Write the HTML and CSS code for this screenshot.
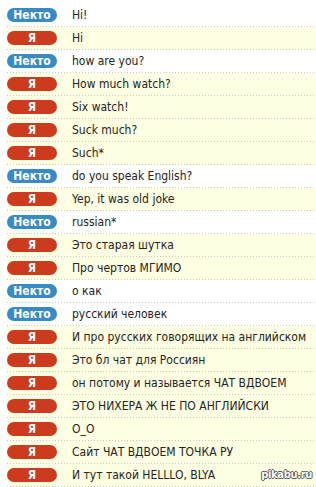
FILE: index.html
```html
<!DOCTYPE html>
<html lang="ru">
<head>
  <title>Чат вдвоем</title>
  <meta charset="UTF-8" />
  <meta name="viewport" content="width=device-width" />
  <link rel="stylesheet" href="styles.css">
</head>
<body>
  <main class="chat">
    <div class="msg"><span class="who them">Некто</span><span class="text">Hi!</span></div>
    <div class="msg me"><span class="who">Я</span><span class="text">Hi</span></div>
    <div class="msg"><span class="who them">Некто</span><span class="text">how are you?</span></div>
    <div class="msg me"><span class="who">Я</span><span class="text">How much watch?</span></div>
    <div class="msg me"><span class="who">Я</span><span class="text">Six watch!</span></div>
    <div class="msg me"><span class="who">Я</span><span class="text">Suck much?</span></div>
    <div class="msg me"><span class="who">Я</span><span class="text">Such*</span></div>
    <div class="msg"><span class="who them">Некто</span><span class="text">do you speak English?</span></div>
    <div class="msg me"><span class="who">Я</span><span class="text">Yep, it was old joke</span></div>
    <div class="msg"><span class="who them">Некто</span><span class="text">russian*</span></div>
    <div class="msg me"><span class="who">Я</span><span class="text">Это старая шутка</span></div>
    <div class="msg me"><span class="who">Я</span><span class="text">Про чертов МГИМО</span></div>
    <div class="msg"><span class="who them">Некто</span><span class="text">о как</span></div>
    <div class="msg"><span class="who them">Некто</span><span class="text">русский человек</span></div>
    <div class="msg me"><span class="who">Я</span><span class="text">И про русских говорящих на английском</span></div>
    <div class="msg me"><span class="who">Я</span><span class="text">Это бл чат для Россиян</span></div>
    <div class="msg me"><span class="who">Я</span><span class="text">он потому и называется ЧАТ ВДВОЕМ</span></div>
    <div class="msg me"><span class="who">Я</span><span class="text">ЭТО НИХЕРА Ж НЕ ПО АНГЛИЙСКИ</span></div>
    <div class="msg me"><span class="who">Я</span><span class="text">O_O</span></div>
    <div class="msg me"><span class="who">Я</span><span class="text">Сайт ЧАТ ВДВОЕМ ТОЧКА РУ</span></div>
    <div class="msg me"><span class="who">Я</span><span class="text">И тут такой HELLLO, BLYA</span></div>
  </main>
  <div class="watermark">pikabu.ru</div>
</body>
</html>
```

FILE: styles.css
```css
body {
  margin: 0;
  background: #fff;
  font-family: "DejaVu Sans Condensed", "DejaVu Sans", sans-serif;
  overflow: hidden;
}

.chat {
  padding: 4px 0 0 7px;
}

.msg {
  display: flex;
  align-items: center;
  height: 22px;
  padding-bottom: 1px;
  background: repeating-linear-gradient(90deg, #c9c9c9 0 1px, transparent 1px 3px) bottom / 100% 1px no-repeat;
}

.msg.me {
  background: repeating-linear-gradient(90deg, #c9c9c9 0 1px, transparent 1px 3px) bottom / 100% 1px no-repeat, #ffffe3;
}

.who {
  flex: none;
  width: 50px;
  height: 14px;
  line-height: 14px;
  border-radius: 7px;
  background: #cc3b1d;
  color: #fff;
  font-size: 12px;
  font-weight: bold;
  text-align: center;
}

.who.them {
  background: #378ac4;
}

.text {
  margin-left: 15px;
  font-size: 12px;
  color: #222;
  white-space: nowrap;
}

.watermark {
  position: absolute;
  right: 4px;
  top: 468px;
  font-size: 11px;
  font-weight: bold;
  letter-spacing: -0.3px;
  color: #fff;
  text-shadow: 1px 0 #555, -1px 0 #555, 0 1px #555, 0 -1px #555;
}
```
